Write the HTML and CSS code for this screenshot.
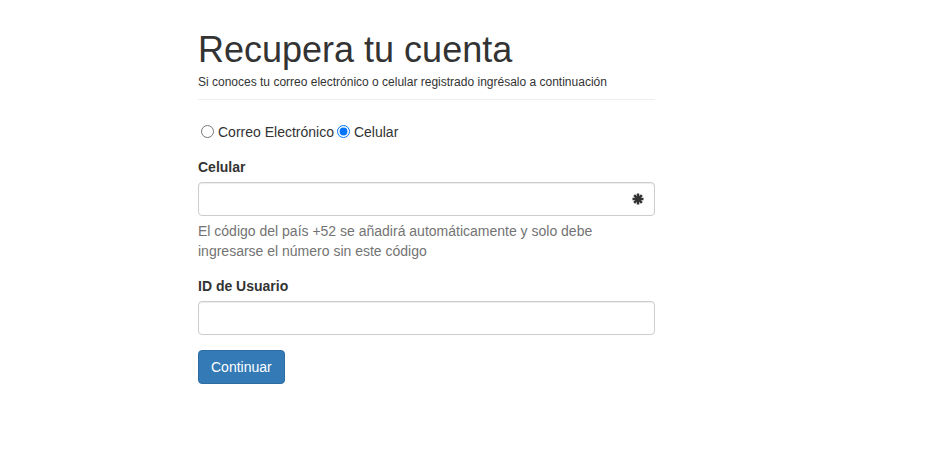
FILE: index.html
```html
<!DOCTYPE html>
<html lang="es">
<head>
<meta charset="utf-8">
<title>Recupera tu cuenta</title>
<link rel="stylesheet" href="styles.css">
</head>
<body>
<div class="wrap">
  <div class="page-header">
    <h1 class="title">Recupera tu cuenta</h1>
    <p class="subtitle">Si conoces tu correo electrónico o celular registrado ingrésalo a continuación</p>
  </div>
  <form class="form">
    <div class="radio-row">
      <label class="radio-label"><input type="radio" name="tipo" class="radio">Correo Electrónico</label>
      <label class="radio-label"><input type="radio" name="tipo" class="radio" checked>Celular</label>
    </div>
    <div class="form-group">
      <label class="field-label" for="cel">Celular</label>
      <div class="input-wrap">
        <input id="cel" class="form-control" type="text">
        <svg class="feedback" viewBox="0 0 12 12" width="12" height="12" aria-hidden="true">
          <g fill="#333" transform="translate(6 6)">
            <rect x="-1.25" y="-5.5" width="2.5" height="11"/>
            <rect x="-1.25" y="-5.5" width="2.5" height="11" transform="rotate(45)"/>
            <rect x="-1.25" y="-5.5" width="2.5" height="11" transform="rotate(90)"/>
            <rect x="-1.25" y="-5.5" width="2.5" height="11" transform="rotate(135)"/>
          </g>
        </svg>
      </div>
      <p class="help-block">El código del país +52 se añadirá automáticamente y solo debe ingresarse el número sin este código</p>
    </div>
    <div class="form-group">
      <label class="field-label" for="uid">ID de Usuario</label>
      <input id="uid" class="form-control" type="text">
    </div>
    <button type="button" class="btn-primary">Continuar</button>
  </form>
</div>
</body>
</html>
```
FILE: styles.css
```css
* { box-sizing: border-box; }
html, body { margin: 0; padding: 0; background: #fff; }
body {
  font-family: "Liberation Sans", Arial, Helvetica, sans-serif;
  font-size: 14px;
  line-height: 20px;
  color: #333;
}
.wrap {
  margin-left: 198px;
  width: 457px;
  padding-top: 30px;
}
.page-header {
  padding-bottom: 8px;
  border-bottom: 1px solid #eee;
  margin-bottom: 22px;
}
.title {
  font-size: 36px;
  font-weight: 500;
  line-height: 39.6px;
  margin: 0 0 4px;
  color: #333;
}
.subtitle {
  font-size: 12px;
  line-height: 17px;
  margin: 0;
}
.form { margin: 0; }
.radio-row {
  display: flex;
  align-items: center;
  margin-bottom: 15px;
  height: 20px;
}
.radio-label {
  display: inline-flex;
  align-items: center;
  font-weight: 400;
}
.radio {
  width: 13px;
  height: 13px;
  margin: 0 4px 0 3px;
}
.form-group { margin-bottom: 15px; }
.field-label {
  display: block;
  font-weight: 700;
  margin-bottom: 5px;
}
.input-wrap { position: relative; }
.form-control {
  display: block;
  width: 100%;
  height: 34px;
  padding: 6px 12px;
  font: inherit;
  color: #555;
  background: #fff;
  border: 1px solid #ccc;
  border-radius: 4px;
  box-shadow: inset 0 1px 1px rgba(0,0,0,.075);
}
.feedback {
  position: absolute;
  right: 11px;
  top: 11px;
}
.help-block {
  margin: 5px 0 0;
  color: #737373;
}
.btn-primary {
  display: inline-block;
  height: 34px;
  padding: 6px 12px;
  font: inherit;
  color: #fff;
  background: #337ab7;
  border: 1px solid #2e6da4;
  border-radius: 4px;
  cursor: pointer;
}
```
